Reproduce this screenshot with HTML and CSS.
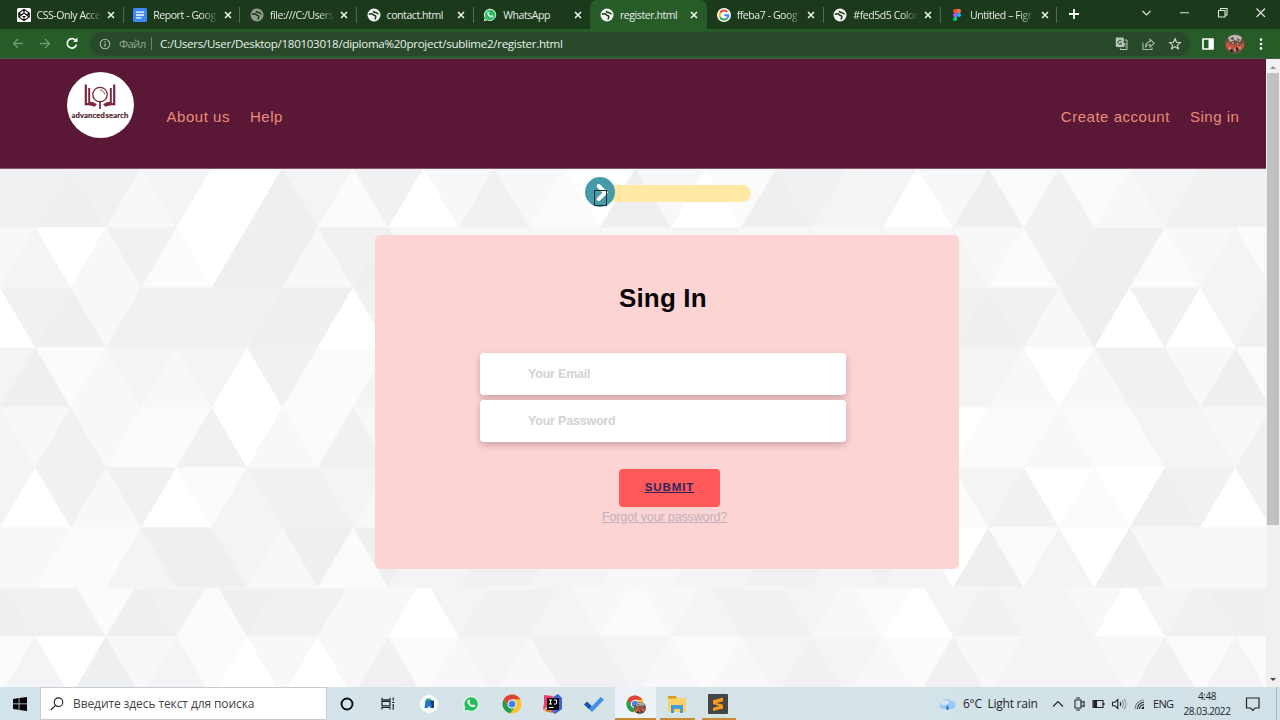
FILE: index.html
```html
<!DOCTYPE html>
<html lang="ru">
<head>
<meta charset="utf-8">
<title>register.html</title>
<link rel="stylesheet" href="styles.css">
</head>
<body>
<svg class="defs" width="0" height="0">
  <symbol id="globe" viewBox="0 0 14 14"><circle cx="7" cy="7" r="6.500"/><path d="M1.800 6.300c2-.8 3.700-.7 4.300.4.600 1.200 2 .6 2.600 1.500.6 1-.7 1.600-.5 3.300M6.500 2.800c-.3 1.700 1.200 1.700 2.200 1.700 1.200.1 1 1.500 3 1.400" fill="none" stroke="#1b3a1c" stroke-width="1.500"/></symbol>
  <symbol id="close" viewBox="0 0 8 8"><path d="M1 1l6 6M7 1L1 7" stroke="#f3f7f3" stroke-width="1.500"/></symbol>
  <symbol id="wa" viewBox="0 0 16 16"><path d="M1 15l1-3.700A7 7 0 1 1 4.800 14z" fill="#e9f9ee"/><path d="M2.200 13.800l.8-2.700A6 6 0 1 1 5 13.100z" fill="#25c05a"/><path d="M5.500 4.300c.8-.6 1.300.1 1.600 1.200.2.600-.7.900-.4 1.400.5 1 1.300 1.700 2.300 2.100.6.300.9-.9 1.400-.6 1 .5 1.700.7 1.100 1.600-.8 1.100-2.600 1-4.200-.1C5.600 8.700 4 6.300 5.500 4.300z" fill="#fff"/></symbol>
  <symbol id="chrome" viewBox="0 0 20 20"><circle cx="10" cy="10" r="9.500" fill="#fbc52d"/><path d="M1.800 5.200A9.500 9.500 0 0 1 18.200 5.300H10L6 12z" fill="#db4437"/><path d="M1.800 5.200L6 12.300l4 2.200-2 4.800A9.500 9.500 0 0 1 1.800 5.200z" fill="#1e9e57"/><path d="M8.500 19.400l4.700-7.200L10 14z" fill="#1e9e57"/><circle cx="10" cy="10" r="4.500" fill="#fff"/><circle cx="10" cy="10" r="3.500" fill="#4285f4"/></symbol>
  <symbol id="face" viewBox="0 0 20 20"><circle cx="10" cy="10" r="10" fill="#6d5046"/><path d="M3 3.500a10 10 0 0 1 14 0L15 8 10 6 5 8z" fill="#b9b8b0"/><path d="M5 5l3-2 1 3zM12 4l3 2-2 1z" fill="#4a3a3a"/><path d="M1 9l3-1 1 3 3-2 1 4 3-4 2 3 4-3 1 3-3 4-3-2-3 3-3-3-3 3-3-4z" fill="#c9553f"/><path d="M4 13l2 1-1 3zM9 14l2 2-1 2zM14 13l2 0-1 3zM7 8l2 1-1 1zM12 9l2 0-1 1z" fill="#e3b8a4"/><path d="M6 15l2 2-1 2-3-2zM11 12l2 3 0 3-2-2z" fill="#2c2526"/></symbol>
</svg>

<div class="screen">
  <div class="tabs">
    <div class="tab"><svg class="fav" viewBox="0 0 14 14"><rect width="14" height="14" rx="1.500" fill="#fff"/><path d="M7 1.500l5.300 3.500v4L7 12.500 1.700 9V5zM7 1.500V5M7 9v3.500M1.700 5L7 9l5.300-4M1.700 9L7 5l5.300 4" fill="none" stroke="#111" stroke-width="1.100"/></svg><span class="title">CSS-Only Acce</span><svg class="x"><use href="#close"/></svg></div>
    <div class="tab"><svg class="fav" viewBox="0 0 14 14"><rect width="14" height="14" rx="1.500" fill="#4285f4"/><path d="M3 4.200h8M3 7h8M3 9.800h5.500" stroke="#fff" stroke-width="1.300"/></svg><span class="title">Report - Goog</span><svg class="x"><use href="#close"/></svg></div>
    <div class="tab"><svg class="fav globe dim"><use href="#globe"/></svg><span class="title">file:///C:/Users</span><svg class="x"><use href="#close"/></svg></div>
    <div class="tab full"><svg class="fav globe"><use href="#globe"/></svg><span class="title">contact.html</span><svg class="x"><use href="#close"/></svg></div>
    <div class="tab full before"><svg class="fav"><use href="#wa"/></svg><span class="title">WhatsApp</span><svg class="x"><use href="#close"/></svg></div>
    <div class="tab full active"><svg class="fav globe"><use href="#globe"/></svg><span class="title">register.html</span><svg class="x"><use href="#close"/></svg></div>
    <div class="tab"><svg class="fav" viewBox="0 0 14 14"><circle cx="7" cy="7" r="7" fill="#fff"/><g fill="none" stroke-width="2"><path d="M10.300 4A4.400 4.400 0 0 0 3.200 4.800" stroke="#ea4335"/><path d="M3.200 4.800a4.400 4.400 0 0 0 0 4.400" stroke="#fbbc05"/><path d="M3.200 9.200a4.400 4.400 0 0 0 6.800 1.300" stroke="#34a853"/><path d="M10 10.500A4.400 4.400 0 0 0 11.400 7.200H7.200" stroke="#4285f4"/></g></svg><span class="title">ffeba7 - Goog</span><svg class="x"><use href="#close"/></svg></div>
    <div class="tab"><svg class="fav globe"><use href="#globe"/></svg><span class="title">#fed5d5 Color</span><svg class="x"><use href="#close"/></svg></div>
    <div class="tab"><svg class="fav" viewBox="0 0 14 14"><path d="M7 1H5a2 2 0 0 0 0 4h2z" fill="#f24e1e"/><path d="M7 1h2a2 2 0 0 1 0 4H7z" fill="#ff7262"/><path d="M7 5H5a2 2 0 0 0 0 4h2z" fill="#a259ff"/><circle cx="9" cy="7" r="2" fill="#1abcfe"/><path d="M7 9H5a2 2 0 1 0 2 2z" fill="#0acf83"/></svg><span class="title">Untitled – Figr</span><svg class="x"><use href="#close"/></svg></div>
    <svg class="plus" viewBox="0 0 10 10"><path d="M5 0v10M0 5h10" stroke="#fff" stroke-width="1.800"/></svg>
    <svg class="winctl" viewBox="0 0 140 28"><g fill="none" stroke="#dfe8df" stroke-width="1.100"><path d="M12.500 11l4 4 4-4M50 12.800h9M88.500 10.500h6.500v6.500h-6.500zM90.500 10.500v-2h6.500v6.500h-2M126.500 8.500l8.500 8.500M135 8.500l-8.500 8.500"/></g></svg>
  </div>

  <div class="toolbar">
    <svg class="navicons" viewBox="0 0 90 30"><g fill="none" stroke-width="1.400"><path d="M23 14.500H13.500M18 10l-4.500 4.500L18 19M40 14.500h9.500M45 10l4.500 4.500L45 19" stroke="#6d9a6e"/><path d="M75.500 11.300A4.700 4.700 0 1 0 76.500 15.500" stroke="#f0f5f0" stroke-width="1.700"/></g><path d="M77.500 8.500v4.500H73z" fill="#f0f5f0"/></svg>
    <div class="omnibox">
      <svg class="info" viewBox="0 0 12 12"><circle cx="6" cy="6" r="4.800" fill="none" stroke="#a9b9aa" stroke-width="1.100"/><path d="M6 5.200v3.500M6 3v1.300" stroke="#a9b9aa" stroke-width="1.200"/></svg>
      <span class="file">Файл</span><span class="bar"></span><span class="url">C:/Users/User/Desktop/180103018/diploma%20project/sublime2/register.html</span>
      <svg class="oicons" viewBox="0 0 70 16"><rect x=".8" y="1.500" width="8" height="9.500" rx="1" fill="#b9c7ba"/><path d="M6.500 5a2 2 0 1 0 .2 2.300H5" fill="none" stroke="#284a2b"/><path d="M9.500 4h2.500v9.500H5.500l-.5-2" fill="none" stroke="#b9c7ba"/><path d="M8 8h3.500M9.700 7v1c0 1.500-1 2.500-1.800 3M8.500 8.500l2.500 3" stroke="#b9c7ba" fill="none" stroke-width=".8"/><g fill="none" stroke="#a9b9aa" stroke-width="1.100"><path d="M28 6.500v7h9v-2M30.500 11c0-3.500 2-5.200 4.500-5.200V3.300l4.200 3.900L35 11V8.500c-2 0-3.300.8-4.500 2.500z"/><path d="M60 2.800l1.500 3.500 3.800.3-2.900 2.500.9 3.700-3.300-2-3.300 2 .9-3.700-2.900-2.500 3.800-.3z" stroke="#c9d4c9" stroke-width="1.200"/></g></svg>
    </div>
    <svg class="side" viewBox="0 0 12 12"><path d="M1 1h10v10H1z" fill="none" stroke="#fff" stroke-width="1.700"/><path d="M6.500 1h4.500v10H6.500z" fill="#fff"/></svg>
    <svg class="avatar"><use href="#face"/></svg>
    <svg class="dots" viewBox="0 0 4 12"><circle cx="2" cy="1.600" r="1.300" fill="#fff"/><circle cx="2" cy="6" r="1.300" fill="#fff"/><circle cx="2" cy="10.400" r="1.300" fill="#fff"/></svg>
  </div>

  <div class="view">
    <div class="page">
      <svg class="pattern" id="pattern" viewBox="0 168 1266 519" width="1266" height="519"></svg>
      <header class="header">
        <div class="logo">
          <svg viewBox="0 0 32 26"><g fill="none" stroke="#7b2236"><path d="M1.800.5v19.800c4-.6 7 .2 9.500 1.600M30.200.5v19.800c-4-.6-7 .2-9.500 1.600" stroke-width="2.100"/><path d="M5.200 4v14.500c3 0 5 .8 7 2.400M26.800 4v14.500c-3 0-5 .8-7 2.400" stroke-width="1.900"/><circle cx="16" cy="10.500" r="7.200" fill="#fff" stroke-width="1.300"/><path d="M16 6a4.500 4.500 0 0 1 4.500 4.500" stroke-width=".8"/><path d="M16 17.500V25" stroke-width="1.700"/></g></svg>
          <span>advanced&#8202;search</span>
        </div>
        <nav class="left"><a>About us</a><a>Help</a></nav>
        <nav class="right"><a>Create account</a><a>Sing in</a></nav>
      </header>
      <main class="main">
        <div class="toggle"><div class="track"></div><div class="knob"><svg viewBox="0 0 30 30"><path d="M13.700 9l6.600 6.600-6.600 6.600" fill="none" stroke="#fff" stroke-width="4" stroke-linecap="round"/><rect x="9.500" y="13.500" width="12" height="15" fill="none" stroke="#142f36" stroke-width="1"/></svg></div></div>
        <form class="card">
          <h1>Sing In</h1>
          <div class="field">Your Email</div>
          <div class="field">Your Password</div>
          <a class="submit">SUBMIT</a>
          <a class="forgot">Forgot your password?</a>
        </form>
      </main>
    </div>
    <div class="scroll"><i class="up"></i><div class="thumb"></div><i class="down"></i></div>
  </div>

  <footer class="taskbar">
    <svg class="start" viewBox="0 0 14 14"><path d="M0 2l5.700-.9v5.500H0zM6.400 1L14 0v6.600H6.400zM0 7.300h5.700v5.500L0 12zM6.400 7.300H14V14l-7.600-1z" fill="#050505"/></svg>
    <div class="search"><svg viewBox="0 0 14 14"><circle cx="8.500" cy="5.200" r="4.300" fill="none" stroke="#222" stroke-width="1.100"/><path d="M5.500 8.300L.8 13" stroke="#222" stroke-width="1.200"/></svg><span>Введите здесь текст для поиска</span></div>
    <div class="apps">
      <div class="app"><svg viewBox="0 0 20 20"><circle cx="10" cy="10" r="5.500" fill="none" stroke="#0a0f14" stroke-width="1.900"/></svg></div>
      <div class="app"><svg viewBox="0 0 20 20"><path d="M4 3.800v2h8v-2M4 15.500v-2h8v2M4 7.300h8v4.600H4zM15.200 3.500v3.300M15.200 10v5.800M14 8.500h2.500" fill="none" stroke="#222" stroke-width="1.200"/></svg></div>
      <div class="app"><svg viewBox="0 0 20 20"><circle cx="10" cy="10" r="9" fill="#fcfdfe"/><path d="M5.500 14L6.500 6h5.700l1.300 8h-2l-1.500-2-1.500 2z" fill="#2575c9"/><path d="M6.500 6.500L8 4.500h3.500l1 2z" fill="#2bb673"/><path d="M11.500 6.500H15V14h-2z" fill="#17406d"/></svg></div>
      <div class="app"><svg class="small" viewBox="0 0 16 16"><use href="#wa"/></svg></div>
      <div class="app"><svg><use href="#chrome"/></svg></div>
      <div class="app"><svg viewBox="0 0 20 20"><path d="M1 1l9 1-2 8-8 6 1-7z" fill="#ee3b73"/><path d="M1 16l7-4 3 7-7-1z" fill="#e87a2c"/><path d="M10 3l5-3 4 4v11l-7 5-4-4z" fill="#3b62cf"/><path d="M12 3l4 3-1 10-5 3z" fill="#7561cf"/><rect x="4" y="4" width="12" height="12" fill="#0a0a0a"/><path d="M6 6h3M7.500 6v4M6 10h3M11 6h2.500v3c0 1-1 1.300-2.500 1M6 13.500h4.500" stroke="#fff" fill="none"/></svg></div>
      <div class="app"><svg viewBox="0 0 20 20"><path d="M0 10.500l3-3 5 4.800-3 3z" fill="#1956ad"/><path d="M5 15.300L16.800 3 20 5.800 8 18z" fill="#3f91e5"/></svg></div>
      <div class="app open current"><svg viewBox="0 0 20 20"><use href="#chrome" width="18" height="18" y="1"/><use href="#face" x="8" y="8" width="12" height="12"/></svg></div>
      <div class="app open"><svg viewBox="0 0 20 20"><path d="M1 2h8l1 2h9v14H1z" fill="#fbd267"/><path d="M1 2h8l1 2.500H1z" fill="#d99b1d"/><path d="M4 19v-8h12v8h-3v-4H7v4z" fill="#429bd8"/></svg></div>
      <div class="app open"><svg viewBox="0 0 20 20"><rect width="20" height="20" rx="1" fill="#464646"/><path d="M15 3.500v3.700L8.700 9l6.300 1.800v3.700L5 17v-3.300L11.200 12 5 10V6.300z" fill="#f79a1e"/></svg></div>
    </div>
    <svg class="weather" viewBox="0 0 18 14"><path d="M4 12a3.800 3.800 0 0 1 .3-7A5 5 0 0 1 13 4a4 4 0 0 1 1 8z" fill="#9cc9f1"/><path d="M3.500 8a4 4 0 0 1 3-4.500 4.500 4.500 0 0 1 5 2L8 8z" fill="#d2e9fb"/><path d="M9.500 8c2 2.700 2 4.800 0 4.800s-2-2.100 0-4.800z" fill="#2f7fd6"/></svg>
    <span class="temp">6°C&nbsp; Light rain</span>
    <svg class="tray" viewBox="0 0 100 16"><g fill="none" stroke="#222" stroke-width="1.100"><path d="M3 10.500L8 5.500l5 5M25 4h6v8h-6zM26 2h4M26 14h4M31 6.500l3-1v5l-3-1M43 4.500h10v7H43zM54 7v2"/><path d="M62.500 6.200h2.300l3-2.700v9l-3-2.700h-2.300zM70 6c1 1.200 1 2.800 0 4"/><path d="M72 4.500c2 2 2 5 0 7M74 3c2.800 3 2.800 7 0 10" stroke="#8b979d"/><path d="M85 13A9 9 0 0 1 94 4" stroke="#6d787d"/><path d="M87.300 13A6.800 6.800 0 0 1 94 6.300M89.500 13A4.600 4.600 0 0 1 94 8.600"/></g><path d="M43.500 5H47v6h-3.500z" fill="#222"/><path d="M91.500 13A2.500 2.500 0 0 1 94 10.500V13z" fill="#222"/></svg>
    <span class="lang">ENG</span>
    <div class="clock"><span>4:48</span><span>28.03.2022</span></div>
    <svg class="note" viewBox="0 0 16 16"><path d="M1.500 2h12.500v10H10l-2.200 2.300L5.500 12h-4z" fill="none" stroke="#222" stroke-width="1.200"/></svg>
    <span class="edge"></span>
  </footer>
</div>
<script src="pattern.js"></script>
</body>
</html>
```

FILE: styles.css
```css
* { box-sizing: border-box; }
body { margin: 0; overflow: hidden; font-family: "Liberation Sans", Arial, sans-serif; }
svg { display: block; flex: none; }
.defs { position: absolute; }
.screen { width: 1280px; height: 720px; display: flex; flex-direction: column; }

.tabs { height: 29px; background: #1b3a1c; display: flex; padding-left: 7px; font: 10.500px "Open Sans", "Noto Sans", sans-serif; color: #e6ede6; flex: none; }
.tab { width: 116.7px; flex: none; display: flex; align-items: center; padding-left: 9.500px; position: relative; }
.tab::after { content: ""; width: 1px; height: 16px; background: #4f6e50; position: absolute; right: 0; top: 7px; }
.tab.before::after, .tab.active::after { display: none; }
.tab.active { background: #275c29; border-radius: 7px 7px 0 0; }
.fav { width: 14px; height: 14px; }
.globe { fill: #f2f5f2; }
.dim { fill: #8f9c90; }
.title { width: 65px; margin-left: 6px; white-space: nowrap; letter-spacing: -.42px; -webkit-mask-image: linear-gradient(90deg, #000 75%, transparent); mask-image: linear-gradient(90deg, #000 75%, transparent); }
.full .title { -webkit-mask-image: none; mask-image: none; }
.x { width: 8px; height: 8px; margin-left: 5.500px; }
.plus { width: 10px; height: 10px; margin: 9px 0 0 12px; }
.winctl { width: 140px; height: 28px; margin-left: auto; margin-right: 10px; }

.toolbar { height: 30px; background: #275c29; border-bottom: 1px solid #4b5c46; display: flex; align-items: center; flex: none; font: 11.600px "Open Sans", "Noto Sans", sans-serif; }
.navicons { width: 90px; height: 30px; }
.omnibox { width: 1100px; height: 24px; border-radius: 12px; background: #284a2b; display: flex; align-items: center; padding-left: 9px; }
.info { width: 12px; height: 12px; }
.file { margin-left: 8px; color: #8fa591; width: 28px; letter-spacing: -.8px; }
.bar { width: 1px; height: 13px; background: #6c846e; margin-left: 4px; }
.url { margin-left: 8px; color: #e9f0e9; letter-spacing: -.3px; white-space: nowrap; }
.oicons { width: 70px; height: 16px; margin-left: auto; margin-right: 5px; }
.side { width: 12px; height: 12px; margin-left: 12px; }
.avatar { width: 20px; height: 20px; margin-left: 11px; }
.dots { width: 4px; height: 12px; margin-left: 14px; }

.view { flex: 1; display: flex; min-height: 0; }
.page { width: 1266px; position: relative; display: flex; flex-direction: column; }
.pattern { position: absolute; left: 0; bottom: 0; background: #f7f7f9; }
.header { height: 110px; background: #5b1836; display: flex; padding-left: 66.500px; flex: none; position: relative; border-bottom: 1px solid #85586c; }
.logo { width: 67px; height: 66px; margin-top: 13px; border-radius: 50%; background: #fff; display: flex; flex-direction: column; align-items: center; padding-top: 12px; }
.logo svg { width: 32px; height: 26px; }
.logo span { font: bold 7.600px/10px Lato, sans-serif; color: #4c2029; margin-top: 0; white-space: nowrap; letter-spacing: .16px; -webkit-text-stroke: .2px #4c2029; }
.header nav { display: flex; gap: 20px; padding-top: 49px; font-size: 15px; line-height: 18px; letter-spacing: .53px; color: #e88c78; white-space: nowrap; }
.left { margin-left: 33px; }
.right { margin-left: auto; margin-right: 26.500px; }

.main { position: relative; display: flex; flex-direction: column; padding-left: 375px; }
.toggle { margin: 8px 0 0 209.500px; display: flex; width: 166px; height: 30px; align-items: center; position: relative; }
.track { width: 166px; height: 17px; border-radius: 9px; background: #ffe9a5; margin-top: 3px; }
.knob { position: absolute; left: 0; top: 0; width: 30px; height: 30px; border-radius: 50%; background: #489ca9; }
.card { margin-top: 28px; width: 584px; height: 334px; background: #fdd4d4; border-radius: 5px; display: flex; flex-direction: column; align-items: flex-start; padding-left: 105px; }
.card h1 { margin: 47px 0 0 139px; font-size: 26px; line-height: 32px; letter-spacing: .15px; color: #080607; }
.field { width: 366px; height: 42px; margin-bottom: 5.500px; background: #fff; border-radius: 4px; box-shadow: 0 3px 7px rgba(70, 35, 45, .28); padding-left: 48px; font-size: 12.500px; font-weight: bold; line-height: 42px; letter-spacing: -.2px; color: #d3d2d3; }
.card h1 + .field { margin-top: 38.500px; }
.submit { width: 101px; height: 38px; margin: 21px 0 0 139px; background: #ff5959; border-radius: 4px; text-align: center; line-height: 37px; font-size: 11.500px; font-weight: bold; letter-spacing: .9px; color: #2b255e; text-decoration: underline; }
.forgot { margin: 2px 0 0 122px; font-size: 12.500px; line-height: 17px; letter-spacing: -.13px; color: #c2b0ba; text-decoration: underline; white-space: nowrap; }

.scroll { width: 14px; background: #f0f0f1; display: flex; flex-direction: column; align-items: center; }
.scroll i { width: 0; height: 0; border: 3px solid transparent; }
.up { border-bottom-color: #929292 !important; border-top: 0 !important; margin: 7px 0 4px; }
.thumb { width: 12px; height: 452px; background: #c1c1c1; }
.down { border-top-color: #444 !important; border-bottom: 0 !important; margin-top: auto; margin-bottom: 6px; }

.taskbar { height: 33px; flex: none; background: linear-gradient(90deg, #d3e3eb, #d6e4e8 50%, #d1e1e7); display: flex; align-items: center; font-family: "Open Sans", "Noto Sans", sans-serif; color: #202428; }
.start { width: 14px; height: 14px; margin-left: 13px; }
.search { width: 287px; height: 33px; margin-left: 13px; background: #fff; border: 1px solid #c6cccf; display: flex; align-items: center; padding-left: 9px; font-size: 12px; color: #444; }
.search svg { width: 14px; height: 14px; }
.search span { margin-left: 9px; white-space: nowrap; letter-spacing: -.1px; }
.apps { display: flex; height: 33px; margin-left: -1px; }
.app { width: 41.300px; height: 33px; display: flex; align-items: center; justify-content: center; position: relative; }
.app svg { width: 20px; height: 20px; }
.app .small { width: 18px; height: 18px; }
.open::after { content: ""; position: absolute; left: 4px; right: 3px; bottom: 0; height: 2px; background: #c98a35; }
.current { background: #ecf3f6; }
.current::after { left: 0; right: 0; }
.weather { width: 18px; height: 14px; margin-left: 199px; }
.temp { width: 80px; margin-left: 7px; font-size: 12px; white-space: nowrap; letter-spacing: -.25px; }
.tray { width: 100px; height: 16px; margin-left: 7px; }
.lang { font-size: 11px; width: 21px; margin-left: 3px; letter-spacing: -.7px; }
.clock { width: 50px; margin-left: 8px; display: flex; flex-direction: column; align-items: center; font-size: 10px; line-height: 15px; letter-spacing: -.4px; }
.note { width: 16px; height: 16px; margin-left: 13px; }
.edge { width: 1px; height: 33px; background: #a4b8c0; margin-left: auto; margin-right: 3px; }
```

FILE: pattern.js
```js
// Triangle mosaic: each digit is the shade of one triangle, left to right.
const shades = ["#ffffff", "#fbfbfc", "#f8f8fa", "#f4f4f6", "#f1f1f3", "#eeeff1"];
const half = 35.3;
const rows = [
  { y: 168, h: 59.5, odd: 0, s: "4454230053140242105201543302514123444" },
  { y: 227.5, h: 60, odd: 1, s: "2302410552452223232232232323214551231" },
  { y: 287.5, h: 60, odd: 0, s: "0452444455043232323232323234542504034" },
  { y: 347.5, h: 60, odd: 1, s: "3512323041130232323232323233320244251" },
  { y: 407.5, h: 60, odd: 0, s: "3242114021423232323232323230112113324" },
  { y: 467.5, h: 60, odd: 1, s: "3042401344323232323232323231340105404" },
  { y: 527.5, h: 60, odd: 0, s: "2211355325153344332233443430513052222" },
  { y: 577, h: 59.5, odd: 0, s: "5441541544220344321234432103433203455" },
  { y: 636.5, h: 60, odd: 1, s: "1305231020241232443212343214233324131" }
];
let out = "";
for (const r of rows) {
  [...r.s].forEach((d, i) => {
    const up = i % 2 === r.odd;
    const top = up ? r.y : r.y + r.h;
    const base = up ? r.y + r.h : r.y;
    const x = i * half;
    out += `<polygon points="${x},${top} ${x - half},${base} ${x + half},${base}" fill="${shades[d]}"/>`;
  });
  if (r.y === 527.5) out += '<rect x="0" y="587" width="1266" height="50" fill="#f9f9fa"/>';
}
const clip = '<clipPath id="lower"><rect x="0" y="588.5" width="1266" height="100"/></clipPath>';
const split = out.indexOf("<rect");
document.getElementById("pattern").innerHTML =
  clip + out.slice(0, split) + '<g clip-path="url(#lower)">' + out.slice(split) + "</g>";
```
